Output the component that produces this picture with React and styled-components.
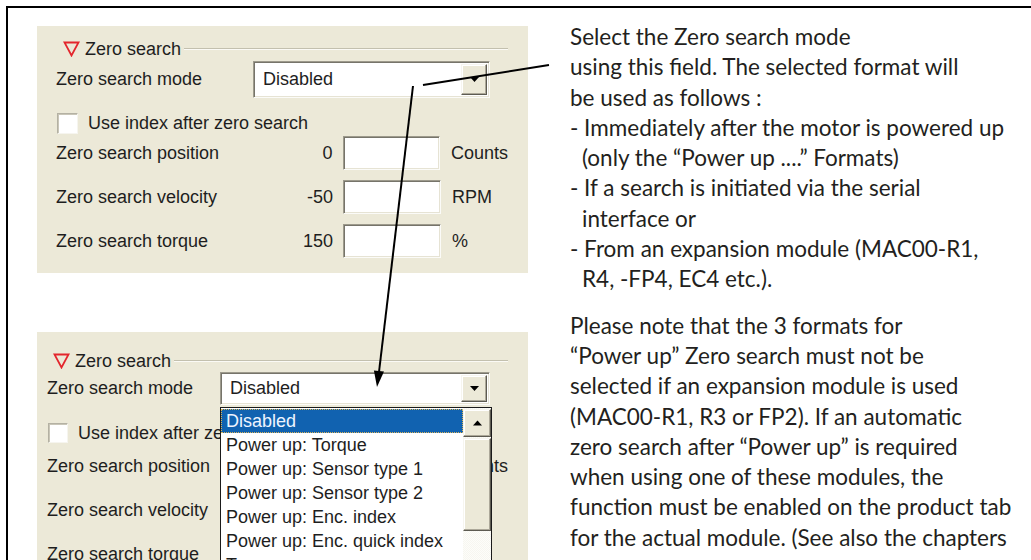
import React from 'react';
import styled, { createGlobalStyle, css } from 'styled-components';

const GlobalStyle = createGlobalStyle`
  html, body {
    margin: 0;
    padding: 0;
    background: #fff;
    overflow: hidden;
  }
`;

const uiFont = css`
  font-family: 'Liberation Sans', Arial, sans-serif;
  font-size: 18px;
  color: #1e1e1e;
`;

const sunken = css`
  box-sizing: border-box;
  background: #fff;
  border: 1px solid;
  border-color: #9d9a8c #fbfbf8 #fbfbf8 #9d9a8c;
  box-shadow: inset 1px 1px 0 #76746a, inset -1px -1px 0 #e6e3d4;
`;

const raised = css`
  box-sizing: border-box;
  background: #ece9d8;
  border: 1px solid;
  border-color: #f6f5ef #5d5b52 #5d5b52 #f6f5ef;
  box-shadow: inset -1px -1px 0 #aca899, inset 1px 1px 0 #fff;
`;

const Page = styled.div`
  position: relative;
  width: 1031px;
  height: 560px;
  padding: 6px 0 0 6px;
  box-sizing: border-box;
  overflow: hidden;
`;

const Frame = styled.div`
  display: flex;
  height: 100%;
  width: 1100px;
  border-top: 2px solid #000;
  border-left: 2px solid #000;
`;

const Shots = styled.div`
  display: flex;
  flex-direction: column;
  gap: 59px;
  width: 491px;
  padding: 18px 0 0 29px;
  flex-shrink: 0;
`;

const Panel = styled.div`
  ${uiFont};
  position: relative;
  display: flex;
  flex-direction: column;
  background: #ece9d8;
  padding: ${p => p.$padTop}px 20px 0 ${p => p.$padLeft}px;
  height: ${p => (p.$height ? `${p.$height}px` : 'auto')};
  flex: ${p => (p.$height ? '0 0 auto' : '1')};
  box-sizing: border-box;
`;

const Legend = styled.div`
  display: flex;
  align-items: center;
  height: ${p => p.$height}px;
  margin-left: ${p => p.$indent}px;
`;

const Caret = styled.svg`
  width: 17px;
  height: 16px;
  flex-shrink: 0;
  margin-right: 5px;
`;

const LegendText = styled.span`
  white-space: nowrap;
`;

const LegendRule = styled.div`
  flex: 1;
  margin-left: 3px;
  border-top: 1px solid #c3c0ae;
  border-bottom: 1px solid #fbfaf5;
`;

const Row = styled.div`
  display: flex;
  align-items: center;
  height: ${p => p.$height}px;
  margin-top: ${p => p.$gap || 0}px;
`;

const Label = styled.div`
  width: ${p => p.$width}px;
  flex-shrink: 0;
  white-space: nowrap;
`;

const Combo = styled.div`
  ${sunken};
  display: flex;
  align-items: stretch;
  width: ${p => p.$width}px;
  height: 100%;
  padding: 2px;
`;

const ComboValue = styled.div`
  flex: 1;
  display: flex;
  align-items: center;
  padding-left: 7px;
`;

const DropButton = styled.div`
  ${raised};
  width: 26px;
  display: flex;
  align-items: center;
  justify-content: center;
`;

const Glyph = styled.svg`
  width: 9px;
  height: 6px;
`;

const CheckBox = styled.div`
  ${sunken};
  width: ${p => p.$size}px;
  height: ${p => p.$size}px;
  margin-left: ${p => p.$indent}px;
  margin-right: 10px;
  box-shadow: inset 1px 1px 0 #c9c6b8;
  border-color: #b4b1a3 #f6f5ef #f6f5ef #b4b1a3;
`;

const Value = styled.div`
  width: ${p => p.$width}px;
  text-align: right;
  margin-right: 10px;
`;

const Field = styled.div`
  ${sunken};
  width: 98px;
  height: 100%;
`;

const Unit = styled.div`
  margin-left: 11px;
  white-space: nowrap;
`;

const DropList = styled.div`
  position: absolute;
  left: 183px;
  top: 75px;
  width: 272px;
  height: 240px;
  display: flex;
  box-sizing: border-box;
  background: #fff;
  border: 1px solid #1a1a1a;
  z-index: 2;
`;

const Items = styled.div`
  flex: 1;
  padding-top: 1px;
`;

const Item = styled.div`
  height: 24px;
  line-height: 24px;
  padding-left: 5px;
  white-space: nowrap;
  box-sizing: border-box;
  ${p =>
    p.$selected &&
    css`
      background: #1162b0;
      color: #eef4ff;
      outline: 1px dotted #d8b35a;
      outline-offset: -1px;
    `}
`;

const ScrollBar = styled.div`
  width: 28px;
  display: flex;
  flex-direction: column;
  padding-top: 1px;
  background: repeating-conic-gradient(#f7f6f0 0 25%, #fdfdfa 0 50%) 0 0 / 2px 2px;
`;

const ScrollButton = styled.div`
  ${raised};
  height: 28px;
  display: flex;
  align-items: center;
  justify-content: center;
`;

const ScrollThumb = styled.div`
  ${raised};
  height: 93px;
  margin-top: 1px;
`;

const Notes = styled.div`
  margin-left: 42px;
  padding-top: 14px;
  font-family: Lato, 'Open Sans', sans-serif;
  font-size: 22.5px;
  line-height: 30.3px;
  color: #231f20;
`;

const Para = styled.div`
  margin-bottom: 16px;
`;

const Line = styled.div`
  white-space: pre;
  padding-left: ${p => (p.$indent ? 12 : 0)}px;
`;

const Callouts = styled.svg`
  position: absolute;
  left: 0;
  top: 0;
  width: 1031px;
  height: 560px;
  pointer-events: none;
  z-index: 5;
`;

const options = [
  'Disabled',
  'Power up: Torque',
  'Power up: Sensor type 1',
  'Power up: Sensor type 2',
  'Power up: Enc. index',
  'Power up: Enc. quick index',
  'Torque',
  'Sensor type 1',
  'Sensor type 2',
];

const fields = [
  { label: 'Zero search position', value: '0', unit: 'Counts' },
  { label: 'Zero search velocity', value: '-50', unit: 'RPM' },
  { label: 'Zero search torque', value: '150', unit: '%' },
];

const notes = [
  [
    ['Select the Zero search mode'],
    ['using this field. The selected format will'],
    ['be used as follows :'],
    ['- Immediately after the motor is powered up'],
    ['(only the “Power up ....” Formats)', true],
    ['- If a search is initiated via the serial'],
    ['interface or', true],
    ['- From an expansion module (MAC00-R1,'],
    ['R4, -FP4, EC4 etc.).', true],
  ],
  [
    ['Please note that the 3 formats for'],
    ['“Power up” Zero search must not be'],
    ['selected if an expansion module is used'],
    ['(MAC00-R1, R3 or FP2). If an automatic'],
    ['zero search after “Power up” is required'],
    ['when using one of these modules, the'],
    ['function must be enabled on the product tab'],
    ['for the actual module. (See also the chapters'],
  ],
];

const DownGlyph = () => (
  <Glyph viewBox="0 0 9 6">
    <polygon points="0,0 9,0 4.5,5" fill="#000" />
  </Glyph>
);

const UpGlyph = () => (
  <Glyph viewBox="0 0 9 6">
    <polygon points="0,5.5 9,5.5 4.5,0.5" fill="#000" />
  </Glyph>
);

const GroupLegend = ({ indent, height }) => (
  <Legend $indent={indent} $height={height}>
    <Caret viewBox="0 0 17 16">
      <polygon
        points="1.5,1.5 15.5,1.5 8.5,14.5"
        fill="none"
        stroke="#e3262d"
        strokeWidth="1.8"
        strokeLinejoin="miter"
      />
    </Caret>
    <LegendText>Zero search</LegendText>
    <LegendRule />
  </Legend>
);

const FieldRow = ({ field, gap, labelWidth, valueWidth }) => (
  <Row $height={34} $gap={gap}>
    <Label $width={labelWidth}>{field.label}</Label>
    <Value $width={valueWidth}>{field.value}</Value>
    <Field />
    <Unit>{field.unit}</Unit>
  </Row>
);

const ClosedPanel = () => (
  <Panel $padTop={11} $padLeft={19} $height={247}>
    <GroupLegend indent={7} height={24} />
    <Row $height={37}>
      <Label $width={197}>Zero search mode</Label>
      <Combo $width={237}>
        <ComboValue>Disabled</ComboValue>
        <DropButton>
          <DownGlyph />
        </DropButton>
      </Combo>
    </Row>
    <Row $height={24} $gap={13}>
      <CheckBox $size={21} $indent={1} />
      Use index after zero search
    </Row>
    {fields.map((f, i) => (
      <FieldRow
        key={f.label}
        field={f}
        gap={i === 0 ? 1 : 10}
        labelWidth={197}
        valueWidth={80}
      />
    ))}
  </Panel>
);

const OpenPanel = () => (
  <Panel $padTop={18} $padLeft={10}>
    <GroupLegend indent={6} height={22} />
    <Row $height={33}>
      <Label $width={173}>Zero search mode</Label>
      <Combo $width={270}>
        <ComboValue>Disabled</ComboValue>
        <DropButton>
          <DownGlyph />
        </DropButton>
      </Combo>
    </Row>
    <Row $height={24} $gap={16}>
      <CheckBox $size={20} $indent={1} />
      Use index after zero search
    </Row>
    {fields.map((f, i) => (
      <FieldRow
        key={f.label}
        field={f}
        gap={i === 0 ? 4 : 10}
        labelWidth={173}
        valueWidth={113}
      />
    ))}
    <DropList>
      <Items>
        {options.map((o, i) => (
          <Item key={o} $selected={i === 0}>
            {o}
          </Item>
        ))}
      </Items>
      <ScrollBar>
        <ScrollButton>
          <UpGlyph />
        </ScrollButton>
        <ScrollThumb />
      </ScrollBar>
    </DropList>
  </Panel>
);

export default function App() {
  return (
    <>
      <GlobalStyle />
      <Page>
        <Frame>
          <Shots>
            <ClosedPanel />
            <OpenPanel />
          </Shots>
          <Notes>
            {notes.map((para, i) => (
              <Para key={i}>
                {para.map(([text, indent]) => (
                  <Line key={text} $indent={indent}>
                    {text}
                  </Line>
                ))}
              </Para>
            ))}
          </Notes>
        </Frame>
        <Callouts viewBox="0 0 1031 560">
          <line x1="423" y1="85" x2="549" y2="65" stroke="#000" strokeWidth="2" />
          <line x1="413" y1="86" x2="379" y2="372" stroke="#000" strokeWidth="2" />
          <polygon points="384,371.6 373.9,370.4 377,387" fill="#000" />
        </Callouts>
      </Page>
    </>
  );
}
